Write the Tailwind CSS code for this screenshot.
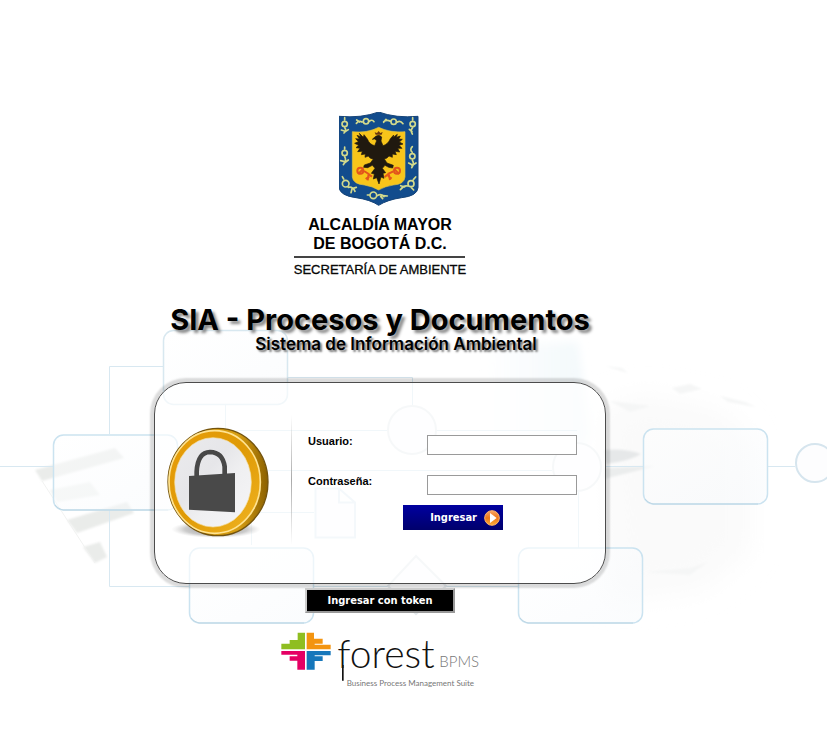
<!DOCTYPE html>
<html lang="es">
<head>
<meta charset="utf-8">
<meta name="viewport" content="width=device-width, initial-scale=1">
<title>SIA - Procesos y Documentos</title>
<script src="https://cdn.jsdelivr.net/npm/@tailwindcss/browser@4"></script>
</head>
<body class="relative min-h-screen overflow-x-hidden bg-white font-['Liberation_Sans',Arial,sans-serif] text-black">

<!-- Process diagram backdrop -->
<svg class="absolute left-0 top-0 w-[827px] max-w-none" viewBox="0 0 827 739" fill="none" aria-hidden="true">
  <defs>
    <linearGradient id="node" x1="0" y1="0" x2="1" y2="1"><stop offset="0" stop-color="#ffffff"/><stop offset="1" stop-color="#f6f9fc"/></linearGradient>
    <linearGradient id="sky" x1="0" y1="0" x2="1" y2="0"><stop offset="0" stop-color="#f3f9fc" stop-opacity="0"/><stop offset="1" stop-color="#f2f8fb"/></linearGradient>
    <filter id="soft" x="-30%" y="-30%" width="160%" height="160%"><feGaussianBlur stdDeviation="14"/></filter>
    <filter id="haze" x="-20%" y="-20%" width="140%" height="140%"><feGaussianBlur stdDeviation="4"/></filter>
    <filter id="edge"><feGaussianBlur stdDeviation="1"/></filter>
  </defs>
  <path d="M490 345L578 342L590 435L575 460L480 450Z" fill="url(#sky)" filter="url(#haze)"/>
  <path d="M600 410L645 395L720 410L750 440L750 550L700 590L610 600Z" fill="#fafafa" filter="url(#soft)"/>
  <g filter="url(#edge)">
    <path d="M604 450Q625 448 641 454Q630 461 606 464Z" fill="#e6e8e9"/>
    <path d="M604 468L655 466L628 473L604 479Z" fill="#ebeded"/>
    <path d="M605 366L622 368L628 373ZM672 388L690 384L702 389L680 394ZM720 396L745 402L756 407L728 402ZM610 401L650 406L668 401L630 412ZM645 572L690 568L708 562L690 575Z" fill="#f5f6f6"/>
    <path d="M35 470L115 448L124 458L42 481ZM67 520L127 502L134 513L77 533ZM83 547L100 542L107 557L95 563Z" fill="#eaecea"/>
    <path d="M50 490L90 482L100 495L57 502Z" fill="#f1f3f1"/>
  </g>
  <path d="M42 481L95 563" stroke="#f1f2f1"/>
  <g stroke="#d8e8f1">
    <path d="M0 466.500H53M109.500 434V366.500H163M109.500 510V586.500H189M288 377.500H412.500V405M768 466.500H795M605 466.500H643"/>
    <path d="M225.500 405V430.500H387M437 430.500H577M268 470.500H552M251.500 545V512.500H314M578.500 492V548M314 586.500H388M446 586.500H518"/>
  </g>
  <g fill="url(#node)" fill-opacity=".5" stroke="#cbe3f0" stroke-width="1.500">
    <rect x="163.500" y="330.500" width="124" height="74" rx="10" stroke="#d8e8f0"/>
    <rect x="53.500" y="435" width="124" height="75" rx="10"/>
    <rect x="189.500" y="548" width="124" height="75" rx="10"/>
    <rect x="518.500" y="548" width="124" height="75" rx="10"/>
    <rect x="643.500" y="429" width="124" height="75" rx="10"/>
  </g>
  <path d="M55 505Q58 509 63 510H168M191 618Q194 622 199 623H304M520 618Q523 622 528 623H633M645 499Q648 503 653 504H758" stroke="#bdd6e4"/>
  <g fill="#fdfdfe" stroke="#e6ebee" stroke-width="2">
    <circle cx="412" cy="430" r="24"/>
    <circle cx="577" cy="467" r="24"/>
    <circle cx="815" cy="463" r="19" stroke="#d6e5ee"/>
    <path d="M315.500 488.500H339L355 502.500V537.500H315.500ZM339 488.500V502.500H355" stroke="#dfecf4"/>
    <path d="M416 556L446 586L416 614L388 586Z"/>
  </g>
</svg>

<main class="relative flex w-full max-w-[760px] flex-col items-center pb-10 pt-28">

  <header class="flex flex-col items-center text-center">
    <svg class="h-[94px] w-[81px]" viewBox="27 21 243 282" role="img" aria-label="Escudo de Bogotá">
      <path d="M27 34Q95 40 146 21Q198 40 264 34V248Q262 273 215 278Q173 284 146 301Q121 284 78 278Q31 272 27 248Z" fill="#124c8d" stroke="#164478" stroke-width="3"/>
      <path d="M67 80Q112 85 146 67Q181 84 225 80V216Q223 238 190 240Q164 244 146 255Q128 244 103 240Q69 237 67 216Z" fill="#f8c51a" stroke="#d9c34b" stroke-width="2"/>
      <g fill="none" stroke="#d3da8c" stroke-width="5" stroke-linecap="round">
        <path d="M116 49A8 8 0 1 1 100 49A8 8 0 1 1 116 49M118 49Q126 42 132 50M96 51Q88 45 79 55M89 51L80 45"/>
        <path d="M199 50A8 8 0 1 1 183 50A8 8 0 1 1 199 50M181 49Q171 43 161 50M202 51Q211 45 219 56M168 43L161 52"/>
        <path d="M52 57A8 8 0 1 1 36 57A8 8 0 1 1 52 57M44 45V38M44 68Q51 76 42 84M46 80L55 74M43 78L34 75"/>
        <path d="M256 57A8 8 0 1 1 240 57A8 8 0 1 1 256 57M248 45V38M248 68Q240 76 247 87M246 80L238 73"/>
        <path d="M52 144A8 8 0 1 1 36 144A8 8 0 1 1 52 144M44 132V126M44 155Q51 165 40 179M44 170L32 167M43 174L55 165"/>
        <path d="M255 154A8 8 0 1 1 239 154A8 8 0 1 1 255 154M247 142Q238 135 247 125M247 166Q254 176 245 188M247 180L236 174M246 182L258 174"/>
        <path d="M57 236A10 10 0 1 1 37 236A10 10 0 1 1 57 236M41 222L37 215M55 247Q68 244 75 259M66 251L79 247M66 252L63 263"/>
        <path d="M252 236A9 9 0 1 1 234 236A9 9 0 1 1 252 236M250 224L257 216M232 243Q222 240 211 254M224 246L212 242M244 248L251 255"/>
        <path d="M140 271A10 10 0 1 1 120 271A10 10 0 1 1 140 271M117 270L112 270M142 272Q153 265 162 275M153 271L172 273M152 274L158 281"/>
      </g>
      <g fill="none" stroke="#e3551c" stroke-width="6">
        <circle cx="91" cy="197" r="9"/><circle cx="201" cy="197" r="9"/>
        <path d="M102 198L116 207L113 226M116 208L126 215M190 199L176 206L180 225M175 207L164 216M85 207L98 193M207 207L194 193M107 222L118 214M185 221L174 213"/>
      </g>
      <path d="M137 89L134 82L141 84L146 78L151 84L158 81L155 89Z" fill="#6a360e"/>
      <path d="M137 94Q148 87 155 96L153 108L159 122Q174 118 181 101L191 90L190 97L202 88L199 97L211 93L206 102L217 103L208 111L219 117L207 121L216 130L203 130L209 141L195 139L199 149L187 147L187 157L177 153Q171 161 163 162L171 174L190 181L188 189L176 187L165 181L157 190L167 203L159 205L162 220L153 216L147 237L140 218L130 222L133 207L124 205L135 190L127 181L113 188L101 187L103 180L121 174L130 162Q120 162 115 153L105 157L106 147L94 149L97 139L83 140L90 130L78 128L86 121L74 115L85 110L77 101L88 102L81 91L92 95L88 85L100 97L102 89L112 102Q119 119 134 122L140 107L134 102L127 103Z" fill="#20190f" stroke="#20190f" stroke-width="2"/>
    </svg>
    <p class="mt-[9px] text-[16px] font-bold leading-[19px]">ALCALDÍA MAYOR<br>DE BOGOTÁ D.C.</p>
    <hr class="mt-[3px] w-[171px] border-t-2 border-[#444]">
    <p class="mt-[3px] text-[13px] leading-[18px] [-webkit-text-stroke:0.3px_#111]">SECRETARÍA DE AMBIENTE</p>
  </header>

  <div class="mt-[25px] flex w-[420px] flex-col items-center whitespace-nowrap font-['Inter','Open_Sans',sans-serif] font-bold">
    <h1 class="text-[29px] leading-[32px] [text-shadow:3px_3px_3px_#888]">SIA - Procesos y Documentos</h1>
    <h2 class="ml-8 text-[17px] font-semibold leading-[16px] [text-shadow:2px_2px_2px_#777]">Sistema de Información Ambiental</h2>
  </div>

  <form class="flex w-full flex-col items-center" onsubmit="return false">
    <section class="mt-[30px] flex h-[202px] w-[452px] rounded-[32px] border border-[#4c4c4c] bg-white/65 shadow-[0_0_2px_4px_rgba(0,0,0,0.14)]">
      <svg class="ml-[10px] mt-11 h-[112px] w-[105px] shrink-0" viewBox="45 81 315 336" aria-hidden="true">
        <defs>
          <linearGradient id="rim" x1="0" y1="0" x2="1" y2="0"><stop offset="0" stop-color="#c48a05"/><stop offset=".7" stop-color="#d79e12"/><stop offset="1" stop-color="#8b6000"/></linearGradient>
          <linearGradient id="ring" x1="0" y1="0" x2="1" y2="1"><stop offset="0" stop-color="#e79d0a"/><stop offset=".5" stop-color="#df9a06"/><stop offset="1" stop-color="#f1b522"/></linearGradient>
          <linearGradient id="face" x1="0" y1="0" x2="1" y2="1"><stop offset="0" stop-color="#ebebed"/><stop offset=".4" stop-color="#e6e6e9"/><stop offset=".6" stop-color="#efeff1"/><stop offset="1" stop-color="#f6f6f8"/></linearGradient>
          <radialGradient id="floor"><stop offset="0" stop-color="#777" stop-opacity=".9"/><stop offset=".7" stop-color="#aaa" stop-opacity=".6"/><stop offset="1" stop-color="#ccc" stop-opacity="0"/></radialGradient>
        </defs>
        <ellipse cx="198" cy="388" rx="134" ry="26" fill="url(#floor)"/>
        <ellipse cx="204" cy="246" rx="150" ry="161" fill="url(#rim)" stroke="#73530d" stroke-width="4"/>
        <ellipse cx="194" cy="246" rx="137" ry="154" fill="url(#ring)" stroke="#ffe391" stroke-width="5"/>
        <ellipse cx="189" cy="247" rx="115" ry="134" fill="url(#face)" stroke="#f5dfa5" stroke-width="2"/>
        <path d="M140 232V215Q143 157 180 156Q218 157 224 200V226" fill="none" stroke="#484848" stroke-width="14"/>
        <path d="M117 228L255 219V337L117 329Z" fill="#494949"/>
      </svg>
      <div class="ml-[21px] mt-8 h-[130px] w-px shrink-0 bg-linear-to-b from-transparent via-[#aaa] to-transparent"></div>
      <div class="ml-4 mt-[52px] grow">
        <div class="flex h-10 justify-between pr-7">
          <label for="usuario" class="text-[11px] font-bold leading-[13px]">Usuario:</label>
          <input id="usuario" type="text" class="h-5 w-[150px] border border-[#9a9a9a] bg-white px-1 text-[12px] outline-none">
        </div>
        <div class="flex h-[30px] justify-between pr-7">
          <label for="clave" class="text-[11px] font-bold leading-[13px]">Contraseña:</label>
          <input id="clave" type="password" class="h-5 w-[150px] border border-[#9a9a9a] bg-white px-1 text-[12px] outline-none">
        </div>
        <button type="submit" class="ml-[95px] flex h-[25px] w-[100px] items-center justify-end gap-[7px] bg-linear-to-b from-[#0000a0] to-[#00006c] pr-[3px] font-['DejaVu_Sans_Condensed',Tahoma,sans-serif] text-[11px] font-bold text-white">
          <span class="pt-[2px]">Ingresar</span>
          <svg class="size-4 shrink-0" viewBox="0 0 48 48" aria-hidden="true">
            <defs><linearGradient id="orange" x1="0" y1="0" x2="0" y2="1"><stop offset="0" stop-color="#f7a466"/><stop offset=".5" stop-color="#ee7717"/><stop offset="1" stop-color="#fdaf39"/></linearGradient></defs>
            <circle cx="24" cy="24" r="22" fill="url(#orange)" stroke="#ffb36b" stroke-width="3"/>
            <path d="M18 9L38 24L18 39Z" fill="#fff"/>
          </svg>
        </button>
      </div>
    </section>

    <button type="button" class="mt-1 h-[25px] w-[150px] border-2 border-[#999] border-l-[#ccc] border-t-[#ccc] bg-black font-['DejaVu_Sans_Condensed',Tahoma,sans-serif] text-[11px] font-bold leading-[21px] text-white">Ingresar con token</button>
  </form>

  <footer class="mt-[17px]">
    <svg class="h-[62px] w-[200px]" viewBox="30 150 600 186" role="img" aria-label="forest BPMS, Business Process Management Suite">
      <path d="M59 180H83V158H105V208H34V191H83V194H59Z" fill="#8fbe21"/>
      <path d="M110 158H132V176H158V191H134V194H182V208H110Z" fill="#f39410"/>
      <path d="M34 213H105V269H82V242H59V229H82V224H34Z" fill="#e50064"/>
      <path d="M110 213H182V226H134V229H158V243H134V269H110Z" fill="#1677bb"/>
      <g font-family="Lato, sans-serif" font-weight="300">
        <text x="202" y="264" font-size="117" fill="#111">forest</text>
        <path d="M218.500 255V302" stroke="#111" stroke-width="5"/>
        <text x="508" y="262" font-size="45" fill="#777">BPMS</text>
        <text x="230" y="318" font-size="24" font-weight="400" fill="#777">Business Process Management Suite</text>
      </g>
    </svg>
  </footer>
</main>
</body>
</html>
